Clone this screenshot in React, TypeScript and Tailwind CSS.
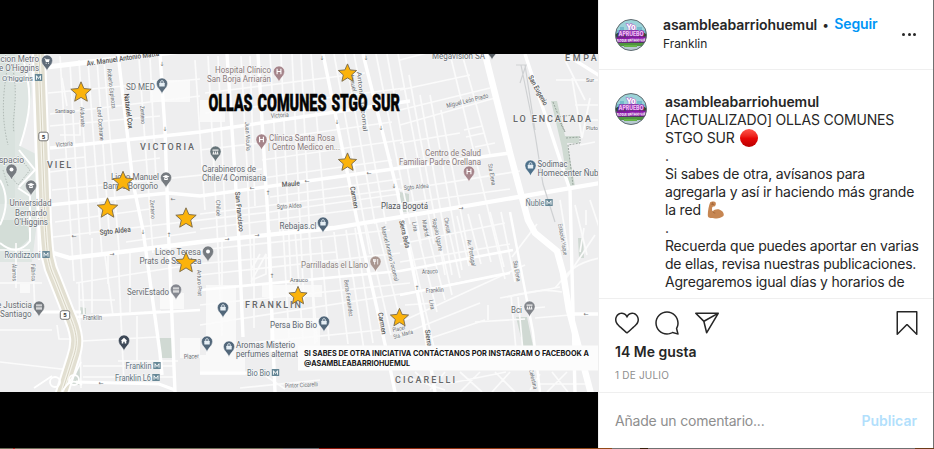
import React from "react";

type LabelProps = {
  x: number;
  y: number;
  t: string;
  w?: number;
  s?: number;
  c?: string;
  r?: number;
  b?: number;
};

// A map label; w fixes the drawn width, r rotates around the anchor point.
function Label({ x, y, t, w, s = 9.6, c = "#686d73", r = 0, b = 400 }: LabelProps) {
  return (
    <text
      x={x}
      y={y}
      fontSize={s}
      fill={c}
      fontWeight={b}
      textLength={w}
      lengthAdjust="spacingAndGlyphs"
      transform={r ? `rotate(${r} ${x} ${y})` : undefined}
      stroke="#f6f6f6"
      strokeWidth={1.4}
      paintOrder="stroke"
    >
      {t}
    </text>
  );
}

const places: LabelProps[] = [
  { x: -4, y: 62, t: "acion Metro", w: 43 },
  { x: -1, y: 71, t: "e O'Higgins", w: 40 },
  { x: 2, y: 80.5, t: "O'higgins", w: 31, s: 8, c: "#5f7480" },
  { x: 126, y: 90, t: "SD MED", w: 29 },
  { x: -1, y: 162.5, t: "spacio", w: 25 },
  { x: 9.5, y: 206, t: "Universidad", w: 42 },
  { x: 15, y: 215.5, t: "Bernardo", w: 32 },
  { x: 14, y: 224.5, t: "O'Higgins", w: 34 },
  { x: 111, y: 180, t: "Liceo Manuel", w: 48 },
  { x: 103, y: 189, t: "Barros Borgoño", w: 55 },
  { x: 215, y: 73, t: "Hospital Clínico", w: 56, c: "#8a7a7c" },
  { x: 207, y: 82, t: "San Borja Arriarán", w: 64, c: "#8a7a7c" },
  { x: 269, y: 141, t: "Clínica Santa Rosa", w: 66, c: "#8a7a7c" },
  { x: 268, y: 150, t: "| Centro Medico en...", w: 72, c: "#8a7a7c" },
  { x: 202, y: 171.5, t: "Carabineros de", w: 54 },
  { x: 202, y: 180.5, t: "Chile/4 Comisaria", w: 64 },
  { x: 432, y: 58.5, t: "Megavisión SA", w: 53 },
  { x: 425, y: 155.5, t: "Centro de Salud", w: 56, c: "#8a7a7c" },
  { x: 399, y: 164.5, t: "Familiar Padre Orellana", w: 82, c: "#8a7a7c" },
  { x: 537.5, y: 167, t: "Sodimac", w: 30, c: "#5d6770" },
  { x: 537.5, y: 176, t: "Homecenter Ñub", w: 61, c: "#5d6770" },
  { x: 525.5, y: 205.5, t: "Ñuble", w: 19, c: "#5f7480" },
  { x: 381, y: 208.5, t: "Plaza Bogotá", w: 47, c: "#4f5357" },
  { x: 279.5, y: 228.5, t: "Rebajas.cl", w: 37, c: "#5d6770" },
  { x: 301, y: 267.5, t: "Parrilladas el Llano", w: 67, c: "#8c8380" },
  { x: 155, y: 254.5, t: "Liceo Teresa", w: 46 },
  { x: 139.5, y: 263.5, t: "Prats de Sarratea", w: 62 },
  { x: 127, y: 295, t: "ServiEstado", w: 42 },
  { x: 4.5, y: 258, t: "Rondizzoni", w: 36, s: 8.5, c: "#5f7480" },
  { x: -3, y: 308, t: "e Justicia", w: 35 },
  { x: 0, y: 317, t: "Santiago", w: 31.5 },
  { x: 125.5, y: 369, t: "Franklin", w: 26, s: 8.5, c: "#5f7480" },
  { x: 115, y: 381, t: "Franklin L6", w: 36, s: 8.5, c: "#5f7480" },
  { x: 270, y: 327.5, t: "Persa Bio Bio", w: 47, c: "#5d6770" },
  { x: 236, y: 348, t: "Aromas Misterio", w: 59, c: "#5d6770" },
  { x: 236, y: 357, t: "perfumes alternat", w: 62, c: "#5d6770" },
  { x: 247, y: 376, t: "Bio Bio", w: 23, s: 8.5, c: "#5f7480" },
  { x: 511, y: 313, t: "Bci", w: 11 },
];

const streets: LabelProps[] = [
  { x: 87, y: 66, t: "Av. Manuel Antonio Matta", w: 73, s: 7.5, c: "#555", r: -8, b: 500 },
  { x: 55, y: 112.5, t: "Santiago", w: 20, s: 6 },
  { x: 56, y: 147, t: "Victoria", w: 17, s: 6.5, r: -5 },
  { x: 80, y: 107, t: "Aldunate", w: 20, s: 6, r: 87 },
  { x: 97, y: 107, t: "Lord Cochrane", w: 34, s: 6.2, r: 85 },
  { x: 107, y: 69, t: "Roberto Espinoza", w: 40, s: 6.2, r: 83 },
  { x: 124, y: 94, t: "Nataniel Cox", w: 35, s: 7.2, c: "#444", r: 83, b: 500 },
  { x: 140, y: 106, t: "Zenteno", w: 18, s: 6, r: 86 },
  { x: 150, y: 200, t: "Zenteno", w: 19, s: 6, r: 86 },
  { x: 271, y: 118, t: "Victoria", w: 18, s: 6.5, r: -4 },
  { x: 245, y: 122, t: "Juan Vicuña", w: 29, s: 6, r: 87 },
  { x: 282, y: 187, t: "Maule", w: 18, s: 7.2, c: "#555", r: -5, b: 500 },
  { x: 277, y: 209, t: "Sgto Aldea", w: 25, s: 6.2, r: -4 },
  { x: 235, y: 192, t: "San Francisco", w: 40, s: 7, c: "#555", r: 84, b: 500 },
  { x: 216, y: 200, t: "Chiloé", w: 16, s: 6, r: 88 },
  { x: 350, y: 187, t: "Carmen", w: 22, s: 7, c: "#555", r: 80, b: 500 },
  { x: 378, y: 313, t: "Carmen", w: 22, s: 7, c: "#555", r: 80, b: 500 },
  { x: 349, y: 72, t: "Manuel", w: 20, s: 6.2, r: 80 },
  { x: 357, y: 72, t: "Antonio Tocornal", w: 60, s: 6.2, r: 84 },
  { x: 381, y: 227, t: "Manuel Antonio Tocornal", w: 56, s: 6.2, r: 76 },
  { x: 344, y: 280, t: "Berta Fernández", w: 37, s: 6.2, r: 82 },
  { x: 447, y: 108, t: "Miguel León Prado", w: 43, s: 6.5, r: -14 },
  { x: 528, y: 77, t: "San Eugenio", w: 33, s: 7.2, c: "#555", r: 61, b: 500 },
  { x: 586, y: 82, t: "Sur", w: 8, s: 6 },
  { x: 586, y: 130, t: "Pluto", w: 12, s: 6 },
  { x: 488, y: 164, t: "Sta Elena", w: 22, s: 6.2, r: 80 },
  { x: 404, y: 190, t: "Sgto Aldea", w: 25, s: 6.2, r: -5 },
  { x: 100, y: 235, t: "Sgto Aldea", w: 31, s: 7.5, c: "#555", r: -6, b: 500 },
  { x: 12, y: 264, t: "Álamos", w: 17, s: 6, r: 88 },
  { x: 31, y: 264, t: "Fábrica", w: 17, s: 6, r: 88 },
  { x: 83, y: 320, t: "Franklin", w: 19, s: 6.5 },
  { x: 184, y: 359, t: "Placer", w: 15, s: 6.5, r: -3 },
  { x: 197, y: 270, t: "Arturo Prat", w: 26, s: 6, r: 88 },
  { x: 290, y: 282, t: "Arauco", w: 18, s: 6 },
  { x: 285, y: 388, t: "Pintor Cicarelli", w: 33, s: 6.2, r: -3 },
  { x: 399, y: 221, t: "Sierra Bella", w: 28, s: 7, c: "#555", r: 77, b: 500 },
  { x: 412, y: 222, t: "Lira", w: 10, s: 6, r: 80 },
  { x: 422, y: 220, t: "Madrid", w: 17, s: 6.2, r: 80 },
  { x: 432, y: 219, t: "Rogelio Ugarte", w: 33, s: 6.2, r: 78 },
  { x: 444, y: 218, t: "Chuvati", w: 16, s: 6.2, r: 80 },
  { x: 467, y: 240, t: "Av. Portugal", w: 27, s: 6.2, r: 80 },
  { x: 513, y: 261, t: "Sta Elena", w: 21, s: 6.2, r: 80 },
  { x: 558, y: 224, t: "Estación Yaque", w: 32, s: 6, r: 80 },
  { x: 422, y: 274, t: "Arauco", w: 16, s: 6.5, r: -3 },
  { x: 426, y: 293, t: "Franklin", w: 18, s: 6.5, r: -4 },
  { x: 429, y: 300, t: "Lira", w: 10, s: 6, r: 80 },
  { x: 425, y: 330, t: "Sierra", w: 17, s: 7, c: "#555", r: 82, b: 500 },
  { x: 393, y: 332, t: "Placer", w: 13, s: 6, r: -12 },
  { x: 394, y: 339, t: "Sta. María", w: 20, s: 6, r: -16 },
  { x: 529, y: 370, t: "Celestina", w: 20, s: 6, r: 77 },
];

const areas: LabelProps[] = [
  { x: 47, y: 168, t: "VIEL", w: 24 },
  { x: 140, y: 150, t: "VICTORIA", w: 54 },
  { x: 513, y: 121.5, t: "LO ENCALADA", w: 78 },
  { x: 565, y: 61, t: "EMPAR", w: 40 },
  { x: 245, y: 307.5, t: "FRANKLIN", w: 56 },
  { x: 395, y: 383, t: "CICARELLI", w: 60 },
];

// Tip position, colour and glyph of each place marker.
const pins: [number, number, string, string][] = [
  [47, 71, "#5f6b78", "cart"],
  [162, 94, "#5c6e7e", "bag"],
  [11.5, 180, "#767b80", "dot"],
  [31, 196, "#767b80", "cap"],
  [166, 188, "#767b80", "cap"],
  [279, 82, "#a5848a", "H"],
  [261.5, 150, "#a5848a", "H"],
  [215.5, 162, "#667479", "bars"],
  [469, 182, "#a5848a", "H"],
  [530.5, 176, "#4e718b", "bag"],
  [492, 60, "#596066", "dot"],
  [323, 233, "#52677a", "bag"],
  [375.5, 272, "#a99690", "fork"],
  [208, 262, "#767b80", "dot"],
  [176, 300, "#858890", "bars"],
  [39, 317, "#767b80", "bars"],
  [124, 351, "#3e4957", "home"],
  [223, 318, "#52677a", "bag"],
  [207, 352, "#52677a", "bag"],
  [229, 357, "#52677a", "bag"],
  [324, 332, "#52677a", "bag"],
  [529.5, 317, "#82858b", "bars"],
];

function Pin({ x, y, c, k }: { x: number; y: number; c: string; k: string }) {
  return (
    <g transform={`translate(${x} ${y})`}>
      <path d="M0 0C-1-4-5.6-6-5.6-10.4A5.6 5.6 0 0 1 5.6-10.4C5.6-6 1-4 0 0Z" fill={c} stroke="#fff" strokeWidth=".5" />
      {k === "H" && <path d="M-1.9-13.3v5.6M1.9-13.3v5.6M-1.9-10.5h3.8" stroke="#fff" strokeWidth="1.1" />}
      {k === "dot" && <circle cy="-10.4" r="2" fill="#fff" />}
      {k === "bag" && (
        <>
          <rect x="-2.7" y="-11.3" width="5.4" height="3.8" rx=".5" fill="#e6eff5" />
          <path d="M-1.4-11.2v-.8a1.4 1.4 0 0 1 2.8 0v.8" fill="none" stroke="#e6eff5" strokeWidth=".8" />
        </>
      )}
      {k === "cap" && <path d="M-3.5-11.4 0-13l3.5 1.6L0-9.8ZM-2-10v1.500Q0-7.400 2-8.500V-10L0-9Z" fill="#fff" />}
      {k === "bars" && <path d="M-3-12.6h6v1.3h-6ZM-2.6-10.6h1.2v2.2h-1.2ZM-.6-10.6h1.2v2.2H-.6ZM1.4-10.6h1.2v2.2H1.4ZM-3-8.4h6v.9h-6Z" fill="#eee" />}
      {k === "home" && <path d="M-3.2-10.2 0-13.2l3.2 3h-.9v2.8H.7v-1.8H-.7v1.8h-1.6v-2.8Z" fill="#fff" />}
      {k === "cart" && <path d="M-3-12.7h1.3l.4 1h4l-.8 2.8h-3l-1-3ZM-1.3-8.2h.9v.9h-.9ZM1-8.2h.9v.9H1Z" fill="#fff" />}
      {k === "fork" && <path d="M-2-13v2.5M-.9-13v5.500M.2-13v2.500M-2-10.500H.2M2.200-13v5.500" stroke="#fff" strokeWidth=".8" fill="none" />}
    </g>
  );
}

const stars: [number, number, number][] = [
  [81, 92.5, 10.7],
  [123, 182, 10.7],
  [107.5, 208.5, 10.7],
  [186, 218.5, 10.7],
  [186, 263, 10.7],
  [347.5, 73.5, 9.6],
  [347.5, 162.5, 9.6],
  [298, 296, 9.6],
  [399.5, 318, 9.6],
];

function starPoints(cx: number, cy: number, r: number) {
  return Array.from({ length: 10 }, (_, i) => {
    const q = i % 2 ? r * 0.46 : r;
    const t = (Math.PI / 5) * i - Math.PI / 2;
    return `${(cx + q * Math.cos(t)).toFixed(1)},${(cy + q * Math.sin(t)).toFixed(1)}`;
  }).join(" ");
}

const minorStreets = [
  // west blocks
  "M48 93 200 79M50 114 200 96M50 126l110-10M50 172l110-14M52 190l210-21M53 237 270 212 400 194M76 283l120-19 140-12",
  "M60 56l14 225M70 63l14 251M79 60l11 175M88 62l14 192M97 60l12 170M104 60l15 190M139 58l14 195M150 58l6 120M79 283l2 105M92 238v75M105 256l8 60M118 254l6 130M130 252v60M137 316v45",
  "M0 283h42M0 250h30M16 243v45M33 265l2 48M57 325l2 14h12M81 316l80-5M82 341l75-4M83 366h90M83 377h90M118 361h60M52 330H0M0 362l70 8",
  "M108 256v28M80 300h35M126 242l70-10M55 222l95-13M55 160l30-3M60 135h20v-15M62 78l5 28",
  // Victoria and centre
  "M195 60l10 150M208 56l8 150 6 130M218 56l8 180M241 56l6 110 5 120M250 56l5 150M270 54l10 180M281 54l10 230M292 54l12 250M301 54l14 290M311 54l14 160M334 54l36 200M345 54l30 170M354 54l32 170",
  "M205 93l160-20M205 113l200-25M262 160l140-20M270 197l130-18M200 150l60-7M200 214l200-25M200 229l200-25M262 140l130-18M262 178l130-18",
  "M270 230l3 100M283 228l6 110M295 230l8 110M309 232l8 110M321 240l8 100M334 232l14 112M346 230l18 120M355 228l18 115M366 225l25 110M376 222l25 100",
  "M222 240v90M254 238v90M200 250l190-20M200 275l200-22M200 305l210-22M200 325l220-34M230 345l150-15M260 372l25 17M240 388l80-8",
  "M252 280l14-6v-20ZM252 268l8-14",
  // east blocks
  "M376 54l34 170M387 54l34 190M398 54l36 190M409 75l36 200M420 95l32 180M430 95l32 175M441 110l30 155M450 54l55 225M462 54l28 100M400 60l65-17M400 90l70-15M400 125l95-27M400 143l60-10M400 110l90-22M400 204l110-15M400 190l120-19M464 130l18-4M466 137l18-4M475 147l20-4",
  "M405 222l30 130M415 222l22 90M425 222l20 78M435 220l17 75M446 218l14 60M457 216l12 50M468 214l13 50M479 214l12 48M490 212l14 55M501 212l14 70M400 244l105-21M400 262l110-18M400 295l105-22M405 320l120-55M400 335l80-32M425 340l60-20",
  "M405 305l30-2M475 322l50-3M488 305v15M500 298l60-11M535 318l35-3M512 257l25-33M545 307l-20 2M518 297l5 55M511 295l5 55",
  // south-east
  "M400 375l45 15M415 372l20 18M445 372l-15 18M460 372l22 20M480 372l-20 20M495 372l20 20M510 372l-18 20M540 374l-10 16M540 384h45M552 372l16 20M567 372l-20 20M446 384l60-12",
  "M556 80h45M565 60l20 40M575 105h25M572 78l10 60M578 120h20M580 145l15-3M590 98l-8 40M575 205l12 50M590 200l10 30M560 200l8 50M586 210v15",
  // slip roads
  "M555 288c10-10 14-24 45-30M562 292c-10-2-20-4-55 5M565 280l30-45M580 252l4-24",
];

const HIGHWAY = "M39 54l6 168c2 30 2 40 10 57l13 33c10 22 10 32 5 46l-12 38";

function MapImage() {
  return (
    <svg className="block h-[338px] w-[598px]" viewBox="0 54 598 338" fontFamily="Roboto, sans-serif" role="img">
      <rect y="54" width="598" height="338" fill="#eeeeef" />
      {/* parks */}
      <path d="M0 54h22c17 30 8 60-2 92l16 8v76l-4 32H0Z" fill="#dfe6e3" />
      <path d="M0 54h15v150H0Z" fill="#d9e2de" />
      <path d="M0 220h26l4 18-14 13H0Z" fill="#d3ddd7" />
      <path d="M551 101h6l8 35h14v7h-12l8 43h-7l-6-38Z" fill="#cfdad2" />
      <path d="M578 238h5l1 20h-5ZM516 317h11l6 29h-10ZM159 338h13v20h-13ZM400 192l9 2v18h-9ZM78 365h3v20H62l14-10ZM80 307l6 1v6h-7Z" fill="#d0d9d3" />
      <path d="M20 284h10v9H20ZM180 338h20v20h-20ZM160 293h24v16h-24ZM206 285h30v80h-30ZM262 285h60v12h-60ZM270 318h50v34h-50ZM200 355h45v20h-45ZM150 80h40v22h-40ZM200 100h25v22h-25Z" fill="#f9f9f9" />
      {minorStreets.map((d) => (
        <path key={d} d={d} fill="none" stroke="#fbfbfb" strokeWidth="1.7" />
      ))}
      {/* park paths */}
      <path d="M22 54c12 42 8 62-2 92M0 180c8 14 8 28 0 45M0 243c12 10 22 8 30-2V196l-12-8M19 150l16 20-16 17" fill="none" stroke="#fff" strokeWidth="2" />
      <path d="M7 70C2 100 2 120 8 145M13 70c6 30-2 50 1 62M18 156l12 14-12 15-12-14ZM3 170l5 16" fill="none" stroke="#a4aea9" strokeWidth=".8" strokeDasharray="1.5 1.5" />
      <path d="M553 102l12 30-8-15 16-2M566 138l14-1v6l-12 2 5 40" fill="none" stroke="#8a978f" strokeWidth=".8" strokeDasharray="2 1.2" />
      {/* avenues */}
      <g fill="none" stroke="#fff" strokeWidth="3.4">
        <path d="M47 67 200 49" strokeWidth="5" />
        <path d="M50 148 200 132 410 101M50 205l118-12 32 3 200-28 110-15" />
        <path d="M50 252l20 6 43-5 87-11 133-14 67-11 60-10 140-24" strokeWidth="4.3" />
        <path d="M76 317l124-7M200 290l200-19 113-21M400 295l110-22" strokeWidth="2.6" />
        <path d="M76 382l83 2 16 6M200 373h60M36 312h45" strokeWidth="3" />
        <path d="M118 54l15 129 10 47 17 123 2 22M160 54l5 76 3 90 7 172M227 54l11 166 5 117M258 54l10 166 4 100 3 72" />
        <path d="M323 54l34 166 30 133 8 39M363 54l34 136 26 130 12 72" />
        <path d="M485 54l25 99 18 67 7 13 22 18 6 22 6 37 22 84" strokeWidth="6.5" />
        <path d="M525 54l45 136 5 202M565 54l35 22M572 314h26" strokeWidth="3.4" />
        <path d="M510 212l23 120 7 60" strokeWidth="2.5" />
      </g>
      <path d="M521 65l14 69 8 50 12 38M525 65l10 65M516 65h10l-6 18" fill="none" stroke="#cfd1d3" strokeWidth="1.2" />
      {/* highway */}
      <path d={HIGHWAY} fill="none" stroke="#fff" strokeWidth="14" />
      <path d={HIGHWAY} fill="none" stroke="#e2dfd1" strokeWidth="10" />
      <path d={HIGHWAY} fill="none" stroke="#f5f4ec" strokeWidth="3.4" />
      <path d={HIGHWAY} fill="none" stroke="#d7d3c2" strokeWidth="1" />
      <path d="M33 70l5 150 1 40" fill="none" stroke="#fff" strokeWidth="2" />
      <g fill="none" stroke="#fff" strokeWidth="1.8">
        <circle cx="55" cy="382" r="5" />
        <circle cx="74" cy="380" r="5" />
        <path d="M81 362l-6 12-9 12M82 385c-8-6-14-4-20 7M34 388l18-12" />
      </g>
      {[[43.5, 136.5], [65, 315]].map(([x, y]) => (
        <g key={y}>
          <rect x={x - 4.7} y={y - 4.3} width="9.4" height="8.6" rx="2" fill="#fff" stroke="#666" strokeWidth=".9" />
          <text x={x} y={y + 2.2} fontSize="6" fontWeight="700" textAnchor="middle" fill="#333">5</text>
        </g>
      ))}
      {streets.map((l) => (
        <Label key={`${l.x}-${l.y}`} {...l} />
      ))}
      <g fill="#777" fontSize="6" fontFamily="DejaVu Sans, sans-serif" textAnchor="middle">
        <text x="252" y="190">←</text>
        <text x="307" y="183">←</text>
        <text x="369" y="175">←</text>
        <text x="173" y="201">←</text>
        <text x="74" y="237.5">←</text>
        <text x="112" y="256">→</text>
        <text x="227" y="241">→</text>
        <text x="257" y="237">→</text>
        <text x="461" y="209.5">→</text>
        <text x="586" y="315.5">←</text>
        <text x="101" y="384.5">←</text>
        <text x="162" y="66">↓</text>
        <text x="165" y="131">↓</text>
        <text x="143" y="234">↓</text>
        <text x="169" y="237">↑</text>
        <text x="268" y="195">↑</text>
        <text x="272" y="278">↑</text>
        <text x="337" y="124">↓</text>
        <text x="381" y="130">↓</text>
        <text x="394" y="188">↓</text>
        <text x="417" y="290">↑</text>
        <text x="366" y="60">↓</text>
        <text x="322" y="60">↓</text>
      </g>
      {places.map((l) => (
        <Label key={`${l.x}-${l.y}`} {...l} />
      ))}
      {areas.map((l) => (
        <text key={l.t} x={l.x} y={l.y} fontSize="9" fontWeight="500" fill="#66686a" textLength={l.w} stroke="#f4f4f4" strokeWidth="1.4" paintOrder="stroke">
          {l.t}
        </text>
      ))}
      {[[38.5, 77.5], [46, 254.5], [549, 202.5], [157, 365.5], [156, 377.5], [275.5, 372.5]].map(([x, y]) => (
        <g key={`${x}-${y}`}>
          <rect x={x - 3.7} y={y - 3.5} width="7.4" height="7" fill="#668796" />
          <path d={`M${x - 2} ${y + 2.2}v-4l2 2.8 2-2.8v4`} stroke="#fff" strokeWidth=".9" fill="none" />
        </g>
      ))}
      {pins.map(([x, y, c, k]) => (
        <Pin key={`${x}-${y}`} x={x} y={y} c={c} k={k} />
      ))}
      {stars.map(([x, y, r]) => (
        <polygon key={`${x}-${y}`} points={starPoints(x, y, r)} fill="#fbb30b" stroke="#77684a" strokeWidth=".9" />
      ))}
      <rect x="298" y="345.5" width="300" height="25" fill="#fcfcfc" />
      <g fontFamily="Inter, sans-serif" fill="#161616" fontWeight="700" fontSize="7.2">
        <text x="304" y="356" textLength="285" lengthAdjust="spacingAndGlyphs">
          SI SABES DE OTRA INICIATIVA CONTÁCTANOS POR INSTAGRAM O FACEBOOK A
        </text>
        <text x="304" y="366" textLength="106" lengthAdjust="spacingAndGlyphs">
          @ASAMBLEABARRIOHUEMUL
        </text>
      </g>
      <g fontWeight="900" fontSize="24" fill="#050505" stroke="#050505" strokeWidth=".5">
        <text x="208.5" y="111.3" textLength="44" lengthAdjust="spacingAndGlyphs">OLLAS</text>
        <text x="257.5" y="111.3" textLength="69" lengthAdjust="spacingAndGlyphs">COMUNES</text>
        <text x="331.5" y="111.3" textLength="36" lengthAdjust="spacingAndGlyphs">STGO</text>
        <text x="372" y="111.3" textLength="28" lengthAdjust="spacingAndGlyphs">SUR</text>
      </g>
    </svg>
  );
}

function Avatar() {
  return (
    <svg className="h-8 w-8 shrink-0" viewBox="0 0 32 32">
      <defs>
        <clipPath id="avatarDisc">
          <circle cx="16" cy="16" r="15.5" />
        </clipPath>
      </defs>
      <g clipPath="url(#avatarDisc)">
        <rect width="32" height="32" fill="#9bd3d8" />
        <path d="M0 11h5V8h4v4h13V8h5v3h5v6H0Z" fill="#75bacb" />
        <path d="M0 16q4-5 8 0h16q4-5 8 0v9H0Z" fill="#2c4931" />
        <rect y="24" width="32" height="4" fill="#4f963f" />
        <rect y="27" width="32" height="5" fill="#b7c9d1" />
        <path d="M9 26h13v2H9Z" fill="#65b348" />
        <path d="M0 18.600 32 17.500v5.700L0 23.800Z" fill="#8b17a9" />
        <g fontFamily="Inter, sans-serif" fontWeight="800" textAnchor="middle" fill="#fff">
          <text x="16" y="10.500" fontSize="7.500" stroke="#b45bca" strokeWidth="1" paintOrder="stroke">Yo</text>
          <text x="16" y="17" fontSize="5.800" stroke="#8b22aa" strokeWidth="1.600" paintOrder="stroke" fill="#f1c4f4" textLength="25" lengthAdjust="spacingAndGlyphs">APRUEBO</text>
          <text x="16" y="22.600" fontSize="3.700" textLength="29" lengthAdjust="spacingAndGlyphs" transform="rotate(-1 16 22)">BLOQUE SINTIAGO SUR</text>
        </g>
      </g>
      <circle cx="16" cy="16" r="15.5" fill="none" stroke="#626b70" />
    </svg>
  );
}

function Icon({ d }: { d: string }) {
  return (
    <svg className="h-6 w-6" viewBox="0 0 48 48" fill="#262626">
      <path d={d} />
    </svg>
  );
}

const HEART =
  "M34.6 6.1c5.7 0 10.4 5.2 10.4 11.5 0 6.8-5.9 11-11.5 16S25 41.3 24 41.9c-1.1-.7-4.7-4-9.5-8.3-5.7-5-11.5-9.2-11.5-16C3 11.3 7.7 6.1 13.4 6.1c4.2 0 6.5 2 8.1 4.3 1.9 2.6 2.2 3.9 2.5 3.9.3 0 .6-1.3 2.5-3.9 1.6-2.3 3.9-4.3 8.1-4.3m0-3c-4.5 0-7.9 1.8-10.6 5.6-2.7-3.7-6.1-5.5-10.6-5.5C6 3.1 0 9.6 0 17.6c0 7.3 5.4 12 10.6 16.5.6.5 1.3 1.1 1.9 1.7l2.3 2c4.4 3.9 6.6 5.9 7.6 6.5.5.3 1.1.5 1.6.5.6 0 1.1-.2 1.6-.5 1-.6 2.8-2.2 7.8-6.8l2-1.8c.7-.6 1.3-1.2 2-1.7C42.7 29.6 48 25 48 17.6c0-8-6-14.5-13.4-14.5z";
const COMMENT =
  "M47.5 46.1l-2.8-11c1.8-3.3 2.8-7.1 2.8-11.1C47.5 11 37 .5 24 .5S.5 11 .5 24 11 47.5 24 47.5c4 0 7.8-1 11.1-2.8l11 2.8c.8.2 1.6-.6 1.4-1.4zm-3-22.1c0 4-1 7-2.6 10-.2.4-.3.9-.2 1.4l2.1 8.4-8.3-2.1c-.5-.1-1-.1-1.4.2-1.8 1-5.2 2.6-10 2.6-11.4 0-20.6-9.2-20.6-20.5S12.7 3.5 24 3.5 44.5 12.7 44.5 24z";
const SHARE =
  "M47.8 3.8c-.3-.5-.8-.8-1.3-.8h-45C.9 3.1.3 3.5.1 4S0 5.2.4 5.7l15.9 15.6 5.5 22.6c.1.6.6 1 1.2 1.1h.2c.5 0 1-.3 1.3-.7l23.2-39c.4-.4.4-1 .1-1.5zM5.2 6.1h35.5L18 18.7 5.2 6.1zm18.7 33.6l-4.4-18.4L42.4 8.6 23.9 39.7z";
const SAVE =
  "M43.5 48c-.4 0-.8-.2-1.1-.4L24 29 5.6 47.6c-.4.4-1.1.6-1.6.3-.6-.2-1-.8-1-1.4v-45C3 .7 3.7 0 4.5 0h39c.8 0 1.5.7 1.5 1.5v45c0 .6-.4 1.2-.9 1.4-.2.1-.4.1-.6.1zM24 26c.8 0 1.6.3 2.2.9l15.8 16V3H6v39.9l15.8-16c.6-.6 1.4-.9 2.2-.9z";

function FlexedArm() {
  return (
    <svg className="ml-[6px] inline-block h-[18px] w-[17px] align-top" viewBox="0 0 17 18">
      <path d="M3.2 1.2C4.5.1 8 .1 8.6 1.4c.5 1.3.3 3.1-.8 3.8-.9.5-1.9.2-2.4.8-.6 1.2-.5 3.2.2 4.5 1.5-1.9 4.6-2.8 7.2-1.7 2.9 1.1 4.3 3.6 3.9 5.4-.5 2-4.8 3.3-8.6 3.2-3.3 0-6.6-.5-7.1-1.9C.3 13.3 1.5 5 3.2 1.2Z" fill="#c68652" />
      <path d="M5.6 10.5c.6 1 1.6 1.6 2.7 1.5M4.2 3.2l3 .3M5.5 1.3l.3 1.9" fill="none" stroke="#945b32" strokeWidth=".7" />
    </svg>
  );
}

export default function App() {
  return (
    <div className="flex h-[449px] w-[934px] flex-col overflow-hidden bg-white font-['Inter',sans-serif] text-sm leading-[18px] text-[#262626]">
      <main className="flex h-[448px]">
        <div className="flex w-[598px] shrink-0 items-center bg-black pt-[54px] pb-[56px]">
          <MapImage />
        </div>
        <section className="flex w-[336px] flex-col border-r border-r-[#707070] border-l border-l-[#efefef]">
          <header className="flex h-[70px] items-center border-b border-[#efefef] pr-4 pl-4">
            <Avatar />
            <div className="ml-4 flex-1 whitespace-nowrap">
              <div className="flex h-[18px] items-center">
                <span className="-mt-[2px] font-semibold tracking-[-0.09px]">asambleabarriohuemul</span>
                <span className="-mt-[2px] ml-[5px] w-3 text-[12px]">•</span>
                <span className="-mt-[4px] font-semibold tracking-[-0.09px] text-[#0095f6]">Seguir</span>
              </div>
              <div className="text-xs leading-[18px] tracking-[-0.05px]">Franklin</div>
            </div>
            <div className="flex gap-[2.5px] pr-[1px]">
              <i className="h-[3px] w-[3px] rounded-full bg-[#262626]" />
              <i className="h-[3px] w-[3px] rounded-full bg-[#262626]" />
              <i className="h-[3px] w-[3px] rounded-full bg-[#262626]" />
            </div>
          </header>
          <div className="flex h-[228px] overflow-hidden pt-[23px] pl-4">
            <Avatar />
            <div className="ml-[18px] tracking-[-0.2px] whitespace-nowrap">
              <p className="font-semibold tracking-[-0.09px]">asambleabarriohuemul</p>
              <p>[ACTUALIZADO] OLLAS COMUNES</p>
              <p>
                STGO SUR
                <span className="ml-[5px] inline-block h-[18px] w-[18px] rounded-full bg-linear-to-b from-[#ff5148] via-[#e80808] to-[#b80000] align-top" />
              </p>
              <p>.</p>
              <p>Si sabes de otra, avísanos para</p>
              <p>agregarla y así ir haciendo más grande</p>
              <p>
                la red
                <FlexedArm />
              </p>
              <p>.</p>
              <p>Recuerda que puedes aportar en varias</p>
              <p>de ellas, revisa nuestras publicaciones.</p>
              <p>Agregaremos igual días y horarios de</p>
            </div>
          </div>
          <div className="h-[94px] border-t border-[#efefef] pt-3 pr-[14px] pl-4">
            <div className="flex gap-4">
              <Icon d={HEART} />
              <Icon d={COMMENT} />
              <Icon d={SHARE} />
              <span className="flex-1" />
              <Icon d={SAVE} />
            </div>
            <div className="mt-[8px] font-semibold">14 Me gusta</div>
            <div className="mt-[5px] text-[10px] tracking-[0.2px] text-[#8e8e8e]">1 DE JULIO</div>
          </div>
          <footer className="flex flex-1 items-center justify-between border-t border-[#efefef] pr-4 pl-4">
            <span className="tracking-[-0.2px] text-[#8e8e8e]">Añade un comentario...</span>
            <span className="font-semibold text-[#b2dffc]">Publicar</span>
          </footer>
        </section>
      </main>
      <div className="flex h-px">
        <i className="w-[13px] bg-[#6f705a]" />
        <i className="w-[2px] bg-[#a02a20]" />
        <i className="w-[268px] bg-[#6f705a]" />
        <i className="w-[36px] bg-[#696969]" />
        <i className="w-[293px] bg-linear-to-r from-[#8b1408] to-[#914b18]" />
        <i className="w-[28px] bg-[#777]" />
        <i className="w-[8px] bg-[#33210b]" />
        <i className="w-[267px] bg-[#707070]" />
        <i className="w-[19px] bg-[#6a3c18]" />
      </div>
    </div>
  );
}
